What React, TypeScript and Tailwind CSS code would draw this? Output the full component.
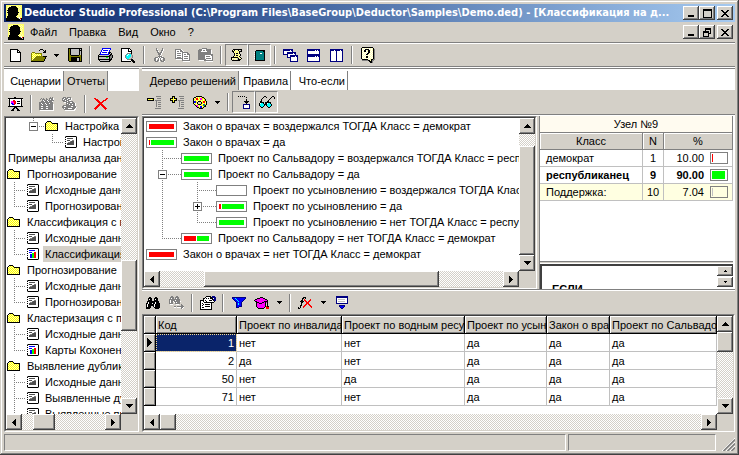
import React from "react";

/* ---------- pixel icons ---------- */

const PALETTE: Record<string, string> = {
  k: "#000000",
  w: "#ffffff",
  y: "#ffff00",
  l: "#ffffb0",
  p: "#ffff66",
  o: "#808000",
  g: "#808080",
  h: "#505050",
  s: "#c0c0c0",
  n: "#000080",
  b: "#0000ff",
  r: "#ff0000",
  d: "#800000",
  t: "#008080",
  c: "#00ffff",
  m: "#ff00ff",
  e: "#00ff00",
};

function Pix({ rows }: { rows: string[] }) {
  const width = Math.max(...rows.map((r) => r.length));
  const rects: React.ReactElement[] = [];
  rows.forEach((row, y) => {
    let x = 0;
    while (x < row.length) {
      const ch = row[x];
      let end = x + 1;
      while (end < row.length && row[end] === ch) end++;
      if (PALETTE[ch]) {
        rects.push(<rect key={`${x}-${y}`} x={x} y={y} width={end - x} height={1} fill={PALETTE[ch]} />);
      }
      x = end;
    }
  });
  return (
    <svg width={width} height={rows.length} viewBox={`0 0 ${width} ${rows.length}`} shapeRendering="crispEdges" className="shrink-0" aria-hidden="true">
      {rects}
    </svg>
  );
}

const LOGO = [
  "pppppppppppppppp",
  "pplplkkkkkplplpp",
  "plpkkkkkkkkplplp",
  "ppkkkkkkkkkkplpp",
  "plkkkkkkkkkklplp",
  "pkkkkkkkkkkkplpp",
  "plkkkkkkkkkkplpp",
  "pkkkkkkkkkkkklpp",
  "plkkkkkkkkkkplpp",
  "ppkkkkkkkkkkplpp",
  "plkkkkkkkkkplplp",
  "pkkkkkkkkklplplp",
  "pkkkkkkkkkkplwpp",
  "kkkkkkkkkkkkhwrk",
  "kkkkkkkkkkkkkksk",
  "kkkkkkkkkkkkkkkk",
];
const NEW = [
  "kkkkkkkk...",
  "kwwwwwwkk..",
  "kwwwwwwkwk.",
  "kwwwwwwkkkk",
  "kwwwwwwwwwk",
  "kwwwwwwwwwk",
  "kwwwwwwwwwk",
  "kwwwwwwwwwk",
  "kwwwwwwwwwk",
  "kwwwwwwwwwk",
  "kwwwwwwwwwk",
  "kwwwwwwwwwk",
  "kkkkkkkkkkk",
];
const OPEN = [
  ".........kkk....",
  "........k...k.k.",
  ".............kk.",
  ".ooo........kkk.",
  "olylooooooo.....",
  "oylylylylyo.....",
  "olylylylylo.....",
  "oylyloooooookkkk",
  "olylooooooooook.",
  "oyloooooooooook.",
  "oloooooooooook..",
  "oooooooooooook..",
  "kkkkkkkkkkkkk...",
];
const SAVE = [
  "kkkkkkkkkkkkkk",
  "kokssssssssksk",
  "koksssssssskkk",
  "kokssssssssksk",
  "kokssssssssksk",
  "kokssssssssksk",
  "kokssssssssksk",
  "kookkkkkkkkook",
  "kooooooooooook",
  "kookkkkkkkkkok",
  "kookkkkkksskok",
  "kookkkkkksskok",
  "kookkkkkksskok",
  ".kkkkkkkkkkkkk",
];
const PRINT = [
  "....bbbbbbbbb..",
  "....bwwwwwwwb..",
  "...bwbbbbbwb...",
  "...bwwwwwwwb...",
  "..bwbbbbbwbkk..",
  "..bwwwwwwwbksk.",
  ".kbbbbbbbbbskk.",
  "ksssssssssskkgk",
  "kkkkkkkkkkkkggk",
  "kssssssseeskggk",
  "ksssssssssskgk.",
  "kkkkkkkkkkkkkk.",
  ".kssssssssskk..",
  "..kkkkkkkkkk...",
];
const PREVIEW = [
  "kkkkkkkkk.......",
  "kwwwwwwkwk......",
  "kwwwwwwkwwk.....",
  "kwwwwwwkkkk.....",
  "kwwwwwwwwwk.....",
  "kwwwwwggggk.....",
  "kwwwwgcwccg.....",
  "kwwwgcwcccsg....",
  "kwwwgcccccsg....",
  "kwwwgccccssg....",
  "kwwwwgccssg.....",
  "kwwwwwggggkk....",
  "kwwwwwwwwwkkk...",
  "kkkkkkkkkk.kkk..",
  "............kk..",
];
const CUT = [
  "..g.....g..",
  "..gw....gw.",
  "..gg...ggw.",
  "...gw..gw..",
  "...gg.ggw..",
  "....gggw...",
  "....gggw...",
  ".....gw....",
  "....ggggw..",
  ".gggwgwggg.",
  "ggwwgwgwwgg",
  "ggw.gwgw.gg",
  "ggwggwgg.gg",
  ".ggg.w.gggw",
];
const COPY = [
  "ggggggw........",
  "gwwwwggw.......",
  "gwggwgggw......",
  "gwwwwwwgggggg..",
  "gwggggwgwwwwgg.",
  "gwwwwwwgwggwggg",
  "gwggggwgwwwwwwg",
  "gwwwwwwgwggggwg",
  "gwggggwgwwwwwwg",
  "ggggggggwggggwg",
  ".wwwwwwgwwwwwwg",
  ".......gggggggg",
  "........wwwwwww",
];
const PASTE = [
  "....ggggg......",
  ".gggwwwwggggg..",
  "ggggwggwgggggw.",
  "gggwwwwwwggggw.",
  "gggggggggggggw.",
  "gggggggggggggw.",
  "ggggggggggggggg",
  "gggggggwwwwwwgg",
  "gggggggwggggwwg",
  "gggggggwwwwwwwg",
  "gggggggwgggggwg",
  "ggggggggwwwwwwg",
  ".wwwwwggggggggg",
  "........wwwwwww",
];
const SCRIPT = [
  "..kkkkkkkkk",
  ".klklllklsk",
  ".kklplplkkk",
  "..klplplk..",
  "...klkklk..",
  "...klplplk.",
  "...klkkllk.",
  "..klplplk..",
  "kkkkkkkplk.",
  "klllllskllk",
  "klslllskkk.",
  ".kkkkkkkk..",
];
const BOOK = [
  "..kkkkkkkkk",
  ".ktttttttkk",
  "wkttttttttk",
  ".kttttwwttk",
  "wkttttttttk",
  ".kttttttttk",
  "wkttttttttk",
  ".kttttttttk",
  "wkttttttttk",
  ".kttttttttk",
  ".kkkkkkkkkk",
];
const CASCADE = [
  "nnnnnnnnnn.....",
  "nnnnnnnwnn.....",
  "nwwwwwwwwn.....",
  "nwwwnnnnnnnnn..",
  "nwwwnnnnnnwnn..",
  "nnnnnwwwwwwwn..",
  "....nwwnnnnnnnn",
  "....nwwnnnnnwnn",
  "....nnnnwwwwwwn",
  ".......nwwwwwwn",
  ".......nwwwwwwn",
  ".......nwwwwwwn",
  ".......nnnnnnnn",
];
const TILE_H = [
  "nnnnnnnnnnnnn",
  "nnnnnnnnwnwnn",
  "nwwwwwwwwwwwn",
  "nwwwwwwwwwwwn",
  "nwwwwwwwwwwwn",
  "nnnnnnnnnnnnn",
  "nnnnnnnnnnnnn",
  "nnnnnnnnwnwnn",
  "nwwwwwwwwwwwn",
  "nwwwwwwwwwwwn",
  "nwwwwwwwwwwwn",
  "nwwwwwwwwwwwn",
  "nnnnnnnnnnnnn",
];
const TILE_V = [
  "nnnnnnnnnnnnn",
  "nnnnwnnnnnwnn",
  "nwwwwwnwwwwwn",
  "nwwwwwnwwwwwn",
  "nwwwwwnwwwwwn",
  "nwwwwwnwwwwwn",
  "nwwwwwnwwwwwn",
  "nwwwwwnwwwwwn",
  "nwwwwwnwwwwwn",
  "nwwwwwnwwwwwn",
  "nwwwwwnwwwwwn",
  "nwwwwwnwwwwwn",
  "nnnnnnnnnnnnn",
];
const HELP = [
  ".kkkkkkkkkkk..",
  "klwlwlwlwlwlk.",
  "kwlwkkkkwlwlkg",
  "klwkkwlkklwlkg",
  "kwlkkwlkkwlwkg",
  "klwlwlwkklwlkg",
  "kwlwlwkklwlwkg",
  "klwlwkklwlwlkg",
  "kwlwlwlwlwlwkg",
  "klwlwkklwlwlkg",
  "kwlwlkkwlwlwkg",
  "klwlwlwlwlwlkg",
  ".kkkkkklwlkkgg",
  ".ggggggkklkgg.",
  "........kkkg..",
  ".........kkg..",
];
const PRESENT = [
  "......kk.......",
  "kkkkkkkkkkkkkkk",
  "wkwwwwwwwwwwwkw",
  ".kwwwrrwwwwwwk.",
  ".kwmmrrrwkkkwk.",
  ".kwmmmrrwwwwwk.",
  ".kwbbmrrwkkkwk.",
  ".kwwbbrwwwwwwk.",
  ".kwwwwwwwwwwwk.",
  "kkkkkkkkkkkkkkk",
  "......kkk......",
  ".....kk.kk.....",
  "....kk...kk....",
  "...kkk...kkk...",
];
const GREY_FACTORY = [
  "...........g.g..",
  "..g.g..g..ggggw.",
  ".g.ggg.gg.gwggw.",
  "...gwgggwgggggg.",
  "..gggwgggwgggw..",
  "gggggggggggggg..",
  "ggwgggwgggwggg..",
  "gggwgggwggggggw.",
  "ggggggggggggggw.",
  "ggwwgggwwgggggw.",
  "ggggggggggggggw.",
  "ggwwgggwwgggggw.",
  "ggggggggggggggw.",
  ".wwwwwwwwwwwwww.",
];
const GREY_GROUP = [
  ".ggg.gggg......",
  "ggwgggwwgw.....",
  "gwgggwgggw.....",
  "gggwgggww......",
  ".ggggwggggg....",
  "..wwggggwwgg...",
  "....gwgggggggw.",
  "....gggwggwggw.",
  ".ggggggggggggw.",
  "ggwwgggggwwggg.",
  "ggggggggggggggw",
  ".gwgggwwwwgggw.",
  "..ggggggggggww.",
  "...wwwwwwwwww..",
];
const RED_X = [
  "rr..........rr",
  ".rrr.......rr.",
  "..rrr....rrr..",
  "...rrr..rr....",
  "....rrrrr.....",
  ".....rrr......",
  "....rrrrr.....",
  "...rrr.rrr....",
  "..rrr...rrr...",
  ".rrr.....rrr..",
  "rrr.......rrr.",
  ".r.........r..",
];
const COLLAPSE = [
  ".........ggggg",
  "..............",
  "kkkkkkk...gggg",
  "kpyplyk.......",
  "kkkkkkk.gggggg",
  ".........g....",
  ".........g.ggg",
  ".........g....",
  ".........g.ggg",
  ".........g....",
  ".........g.ggg",
  "..............",
  "........gggggg",
];
const EXPAND = [
  "..kkk....ggggg",
  "..kyk.........",
  "kkkpkkk...gggg",
  "kpyplyk.......",
  "kkkpkkk.gggggg",
  "..kyk....g....",
  "..kkk....g.ggg",
  ".........g....",
  ".........g.ggg",
  ".........g....",
  ".........g.ggg",
  "..............",
  "........gggggg",
];
const COLORS = [
  "...kkkkkk.....",
  ".kklylylykk...",
  "klyrrlymmyyk..",
  "kylrrylmmylyk.",
  "klylylyylylyk.",
  "kbbylkkklyrryk",
  "kbbyk...kyrrlk",
  "klylk...kylylk",
  ".kylykkkylttyk",
  "..kmmlylyyttk.",
  "...kmylbblykk.",
  "....kkybbyk...",
  "......kkkk....",
];
const JUMP = [
  "k.k.k.k.....",
  "........k...",
  "............",
  "........k...",
  "........k...",
  "......kkkkk.",
  ".......kkk..",
  "........k...",
  ".....nnnnnnn",
  ".....nwwwwwn",
  ".....nwwwwwn",
  ".....nwwwwwn",
  ".....nnnnnnn",
];
const GLASSES = [
  ".....kk......kk.",
  "....k..k....k..k",
  "...k.......k...k",
  "..k.......k.....",
  "..k......k......",
  ".kk.....kk......",
  ".kkkk.kkkkkk....",
  "kwcck.kkwcck....",
  "kcccckkkcccck...",
  "kcccck.kcccck...",
  ".kcck...kcck....",
  "..kk.....kk.....",
];
const FIND = [
  "...kk....kk....",
  "..kkkk..kkkk...",
  "..kwkk..kwkk...",
  "..kkkk..kkkk...",
  ".kkkkkkkkkkkk..",
  ".kwkkkkkkwkkk..",
  "kkwkkkwkkwkkkk.",
  "kwkkkkkkwkkkkk.",
  "kwkkkkkkwkkkkk.",
  "kwkkk..kwkkkkk.",
  "kkkkk...kkkkkk.",
  "kkkk.....kkkk..",
];
const FIND_NEXT = [
  "..gg...gg......",
  ".gggg.gggg.....",
  ".gwgg.gwgg.....",
  "ggggggggggg....",
  "gwggggwgggg....",
  "gwggwggggggw...",
  "gwgg.wgwggg....",
  "gggg..ggggg....",
  ".www...www..g..",
  "............gg.",
  ".....gg.ggggggg",
  ".....ww.wwwwggw",
  "............gw.",
];
const PROPS = [
  "......kkkkk.nnn.",
  ".....kwwwwkknnnn",
  "...kkwkwkwkkkwnn",
  "...kwwwwwwwwknnn",
  "kkkkwkwwwkkkwknn",
  "kwwkwwkwwwwwwwk.",
  "kwwwkkkkkkkkkk..",
  "kwkwwwwwwwwk....",
  "kwwkwkkkkkwk....",
  "kwkwwwwwwwwk....",
  "kwwwwkkkkkwk....",
  "kwkkwwwwwwwk....",
  "kwwwwwwwwwwk....",
  "kkkkkkkkkkkk....",
];
const FUNNEL = [
  "nnnnnnnnnnnnnn",
  "nbbcbbbbbbbbbn",
  ".nbbcbbbbbbbn.",
  "..nbbcbbbbbn..",
  "...nbbcbbbn...",
  "....nbbbbn....",
  "....nbcbbn....",
  "....nbcbbn....",
  "....nbbbbn....",
  "....nbbnnn....",
  "....nnn.......",
];
const HAT = [
  "......kkk......",
  "...kkkmmmkk....",
  ".kkmmmmmmmmkk..",
  "kmmmmmmmmmmmmk.",
  ".kkmmmmmmmkkkk.",
  "..kkkmmmkkmkmk.",
  "..kmmkkkmmmk.k.",
  "..kmmmmmmmmk.k.",
  "..kmmmmmmmmk.k.",
  "..kmmmmmmmmkrkk",
  "...kmmmmmmk.rrr",
  "....kkkkkk..rrr",
];
const FX = [
  ".....kkk.......",
  "....kk.k.......",
  "....k.r.....r..",
  "...kk.rr...rr..",
  "..kkkk.rr.rr...",
  "...kk...rrr....",
  "...k....rrr....",
  "...k...rr.rr...",
  "..kk..rr...rr..",
  "..k..rr.....rr.",
  "k.k..r.......r.",
  "kk.............",
];
const DROP_TABLE = [
  "nnnnnnnnnnnn",
  "nnnnnnnnnnnn",
  "nwwwwwwwwwwn",
  "nwssssssswwn",
  "nwwwwwwwwwwn",
  "nwssssssswwn",
  "nwwwwwwwwwwn",
  "nnnnnnnnnnnn",
  "............",
  "...nnnnnn...",
  "...nbbbbn...",
  "....nbbn....",
  ".....nn.....",
];
const FOLDER = [
  "..kkkk........",
  ".klylyk.......",
  "klylylykkkkkk.",
  "kylylylylylyk.",
  "klylylylylylk.",
  "kylylylylylyk.",
  "klylylylylylk.",
  "kylylylylylyk.",
  "klylylylylylk.",
  "kkkkkkkkkkkkk.",
];
const SHEET = [
  "gkkkkkkkkkkg",
  "kwwwwwwwwwwk",
  "wwhhhhhhwwwk",
  "kwwwwwwwwwwk",
  "wwhhhwwggwwk",
  "kwwwwghhhwwk",
  "wwwgghhhhwwk",
  "kwhhhhhhhwwk",
  "wwhhhhhhhwwk",
  "kwwwwwwwwwwk",
  "kwwwwwwwwwwk",
  "gkkkkkkkkkkg",
];
const CHART = [
  "gkkkkkkkkkkg",
  "kwwwwwwwwwwk",
  "wwbbbbbbwwwk",
  "kwwwwwwwwwwk",
  "wwbbbwwrrwwk",
  "kwwwweerrwwk",
  "wwwbbeerrwwk",
  "kwwbbeerrwwk",
  "wwwbbeerrwwk",
  "kwwbbeerrwwk",
  "kwwwwwwwwwwk",
  "gkkkkkkkkkkg",
];
const CARET = ["kkkkk", ".kkk.", "..k.."];
const UP = ["...k...", "..kkk..", ".kkkkk.", "kkkkkkk"];
const DOWN = ["kkkkkkk", ".kkkkk.", "..kkk..", "...k..."];
const LEFT = ["...k", "..kk", ".kkk", "kkkk", ".kkk", "..kk", "...k"];
const RIGHT = ["k...", "kk..", "kkk.", "kkkk", "kkk.", "kk..", "k..."];
const MINIMIZE = [".......", ".......", ".......", ".......", ".......", ".......", "kkkkkk.", "kkkkkk."];
const MAXIMIZE = ["kkkkkkkkk", "kkkkkkkkk", "k.......k", "k.......k", "k.......k", "k.......k", "k.......k", "k.......k", "kkkkkkkkk"];
const RESTORE = ["..kkkkkk", "..kkkkkk", "..k....k", "kkkkkk.k", "kkkkkk.k", "k....kkk", "k....k..", "k....k..", "kkkkkk.."];
const CLOSE = ["kk....kk", ".kk..kk.", "..kkkk..", "...kk...", "..kkkk..", ".kk..kk.", "kk....kk"];
const POINTER = ["k.....", "kk....", "kkk...", "kkkk..", "kkkkk.", "kkkk..", "kkk...", "kk....", "k....."];

/* ---------- shared pieces ---------- */

const RAISED =
  "bg-[#d4d0c8] shadow-[inset_-1px_-1px_#404040,inset_1px_1px_#fff,inset_-2px_-2px_#808080]";
const TRACK =
  "bg-[repeating-conic-gradient(#ffffff_0_25%,#d4d0c8_0_50%)] bg-[length:2px_2px]";

function ToolButton({ icon, label, pressed }: { icon: string[]; label: string; pressed?: boolean }) {
  return (
    <button
      type="button"
      aria-label={label}
      className={
        "flex h-[22px] w-[23px] shrink-0 items-center justify-center " +
        (pressed ? "border border-t-[#808080] border-l-[#808080] border-r-white border-b-white" : "")
      }
    >
      <Pix rows={icon} />
    </button>
  );
}

function CaretButton({ label }: { label: string }) {
  return (
    <button type="button" aria-label={label} className="flex h-[22px] w-[13px] shrink-0 items-center justify-center">
      <Pix rows={CARET} />
    </button>
  );
}

function Sep() {
  return (
    <div className="flex w-2 shrink-0 justify-center">
      <div className="h-[18px] w-[2px] border-l border-l-[#808080] bg-white" />
    </div>
  );
}

function Groove() {
  return <div className="h-[2px] shrink-0 border-t border-t-[#808080] bg-white" />;
}

function Sunken({ className, children }: { className: string; children: React.ReactNode }) {
  return (
    <div className={"flex min-h-0 min-w-0 border border-t-[#808080] border-l-[#808080] border-r-white border-b-white " + className}>
      <div className="flex min-h-0 min-w-0 flex-1 flex-col border border-t-[#404040] border-l-[#404040] border-r-[#d4d0c8] border-b-[#d4d0c8] bg-white">
        {children}
      </div>
    </div>
  );
}

function ScrollV({ before, thumb, after }: { before: string; thumb: string; after: string }) {
  return (
    <div className={"flex w-4 shrink-0 flex-col " + TRACK}>
      <button type="button" aria-label="Вверх" className={"flex h-4 shrink-0 items-center justify-center " + RAISED}>
        <Pix rows={UP} />
      </button>
      <div className={before} />
      <div className={RAISED + " " + thumb} />
      <div className={after} />
      <button type="button" aria-label="Вниз" className={"flex h-4 shrink-0 items-center justify-center " + RAISED}>
        <Pix rows={DOWN} />
      </button>
    </div>
  );
}

function ScrollH({ before, thumb, after }: { before: string; thumb: string; after: string }) {
  return (
    <div className="flex h-4 shrink-0 bg-[#d4d0c8] pr-4">
      <div className={"flex flex-1 " + TRACK}>
        <button type="button" aria-label="Влево" className={"flex w-4 shrink-0 items-center justify-center " + RAISED}>
          <Pix rows={LEFT} />
        </button>
        <div className={before} />
        <div className={RAISED + " " + thumb} />
        <div className={after} />
        <button type="button" aria-label="Вправо" className={"flex w-4 shrink-0 items-center justify-center " + RAISED}>
          <Pix rows={RIGHT} />
        </button>
      </div>
    </div>
  );
}

function WindowButtons({ middle, middleLabel }: { middle: string[]; middleLabel: string }) {
  return (
    <div className="flex shrink-0 pr-[2px]">
      <button type="button" aria-label="Свернуть" className={"flex h-[14px] w-4 items-center justify-center " + RAISED}>
        <Pix rows={MINIMIZE} />
      </button>
      <button type="button" aria-label={middleLabel} className={"flex h-[14px] w-4 items-center justify-center " + RAISED}>
        <Pix rows={middle} />
      </button>
      <button type="button" aria-label="Закрыть" className={"ml-[2px] flex h-[14px] w-4 items-center justify-center " + RAISED}>
        <Pix rows={CLOSE} />
      </button>
    </div>
  );
}

/* Dotted tree connectors; each piece is one row (16px) tall. */
function Guide({ width, x, to, half, box }: { width: number; x: number; to?: number; half?: boolean; box?: "+" | "-" }) {
  return (
    <svg width={width} height={16} viewBox={`0 0 ${width} 16`} shapeRendering="crispEdges" className="shrink-0" aria-hidden="true">
      <g stroke="#808080" strokeWidth={1} strokeDasharray="1 1">
        <line x1={x + 0.5} y1={0} x2={x + 0.5} y2={half ? 8 : 16} />
        {to !== undefined && <line x1={x} y1={8.5} x2={to} y2={8.5} />}
      </g>
      {box && (
        <>
          <rect x={x - 3.5} y={4.5} width={8} height={8} fill="#fff" stroke="#808080" />
          <rect x={x - 2} y={8} width={5} height={1} fill="#000" />
          {box === "+" && <rect x={x} y={6} width={1} height={5} fill="#000" />}
        </>
      )}
    </svg>
  );
}

/* ---------- left project tree ---------- */

type Node = { kind: "root" | "folder" | "item" | "chart" | "sub" | "leaf"; text: string; last?: boolean; selected?: boolean };

const PROJECT: Node[] = [
  { kind: "sub", text: "Настройка" },
  { kind: "leaf", text: "Настройка" },
  { kind: "root", text: "Примеры анализа данных" },
  { kind: "folder", text: "Прогнозирование" },
  { kind: "item", text: "Исходные данные" },
  { kind: "item", text: "Прогнозирование", last: true },
  { kind: "folder", text: "Классификация с помощью" },
  { kind: "item", text: "Исходные данные" },
  { kind: "chart", text: "Классификация", last: true, selected: true },
  { kind: "folder", text: "Прогнозирование" },
  { kind: "item", text: "Исходные данные" },
  { kind: "item", text: "Прогнозирование", last: true },
  { kind: "folder", text: "Кластеризация с помощью" },
  { kind: "item", text: "Исходные данные" },
  { kind: "chart", text: "Карты Кохонена", last: true },
  { kind: "folder", text: "Выявление дубликатов" },
  { kind: "item", text: "Исходные данные" },
  { kind: "item", text: "Выявленные дубликаты" },
  { kind: "item", text: "Выявленные противоречия" },
];

function ProjectRow({ node }: { node: Node }) {
  const { kind, text, last, selected } = node;
  return (
    <li className="flex h-4 items-center whitespace-nowrap">
      {kind === "sub" && <Guide width={39} x={27} to={38} half box="-" />}
      {kind === "leaf" && <Guide width={59} x={46} to={57} half />}
      {(kind === "item" || kind === "chart") && <Guide width={21} x={8} to={19} half={last} />}
      {kind === "folder" && <span className="w-px shrink-0" />}
      {(kind === "folder" || kind === "sub") && <Pix rows={FOLDER} />}
      {(kind === "item" || kind === "leaf") && <Pix rows={SHEET} />}
      {kind === "chart" && <Pix rows={CHART} />}
      <span className={"h-4 flex-1 pl-[2px] leading-4 " + (kind === "root" ? "" : "ml-1 ") + (selected ? "bg-[#d4d0c8]" : "")}>{text}</span>
    </li>
  );
}

/* ---------- decision tree ---------- */

function Bar({ red, green }: { red: string; green: string }) {
  return (
    <div className="flex h-[11px] w-[31px] shrink-0 gap-px border border-[#808080] bg-white p-[2px]">
      {red && <div className={"bg-[#ff0000] " + red} />}
      {green && <div className={"bg-[#00ff00] " + green} />}
    </div>
  );
}

const RULES = [
  { guides: <span className="w-px shrink-0" />, red: "flex-1", green: "", text: "Закон о врачах = воздержался ТОГДА Класс = демократ" },
  { guides: <span className="w-px shrink-0" />, red: "w-px", green: "flex-1", text: "Закон о врачах = да" },
  { guides: <Guide width={36} x={17} to={36} />, red: "", green: "flex-1", text: "Проект по Сальвадору = воздержался ТОГДА Класс = республиканец" },
  { guides: <Guide width={36} x={17} to={36} box="-" />, red: "", green: "flex-1", text: "Проект по Сальвадору = да" },
  { guides: <><Guide width={36} x={17} /><Guide width={35} x={16} to={35} /></>, red: "", green: "", text: "Проект по усыновлению = воздержался ТОГДА Класс = республиканец" },
  { guides: <><Guide width={36} x={17} /><Guide width={35} x={16} to={35} box="+" /></>, red: "w-[2px]", green: "flex-1", text: "Проект по усыновлению = да" },
  { guides: <><Guide width={36} x={17} /><Guide width={35} x={16} to={35} half /></>, red: "", green: "flex-1", text: "Проект по усыновлению = нет ТОГДА Класс = республиканец" },
  { guides: <Guide width={36} x={17} to={36} half />, red: "flex-1", green: "flex-1", text: "Проект по Сальвадору = нет ТОГДА Класс = демократ" },
  { guides: <span className="w-px shrink-0" />, red: "flex-1", green: "", text: "Закон о врачах = нет ТОГДА Класс = демократ" },
];

/* ---------- data grid ---------- */

const COLUMNS = [
  { name: "Код", width: "w-[81px]" },
  { name: "Проект по инвалидам", width: "w-[105px]" },
  { name: "Проект по водным ресурсам", width: "w-[123px]" },
  { name: "Проект по усыновлению", width: "w-[82px]" },
  { name: "Закон о врачах", width: "w-[63px]" },
  { name: "Проект по Сальвадору", width: "" },
];

const DATA = [
  ["1", "нет", "нет", "да", "да", "да"],
  ["2", "да", "нет", "да", "да", "да"],
  ["50", "нет", "да", "да", "да", "да"],
  ["71", "нет", "нет", "да", "да", "да"],
];

const HEAD_CELL =
  "h-[18px] overflow-hidden border-r border-b border-black bg-[#d4d0c8] p-0 pl-[2px] text-left font-normal whitespace-nowrap shadow-[inset_1px_1px_#fff,inset_-1px_-1px_#808080]";

function DataGrid() {
  return (
    <table className="w-full table-fixed border-separate border-spacing-0">
      <thead>
        <tr>
          <th scope="col" aria-label="Строка" className={"w-3 " + HEAD_CELL} />
          {COLUMNS.map((c) => (
            <th key={c.name} scope="col" className={c.width + " " + HEAD_CELL}>{c.name}</th>
          ))}
        </tr>
      </thead>
      <tbody>
        {DATA.map((row, i) => (
          <tr key={row[0]}>
            <td className="h-[18px] overflow-hidden border-r border-b border-black bg-[#d4d0c8] p-0 pl-[3px] shadow-[inset_1px_1px_#fff,inset_-1px_-1px_#808080]">
              {i === 0 && <Pix rows={POINTER} />}
            </td>
            {row.map((cell, j) => (
              <td
                key={j}
                className={
                  "h-[18px] overflow-hidden border-r border-b border-[#c0c0c0] p-0 px-[2px] whitespace-nowrap " +
                  (j === 0 ? "text-right " : "") +
                  (i === 0 && j === 0 ? "bg-[#0a246a] text-white outline-1 -outline-offset-1 outline-dotted outline-[#f5db95]" : "")
                }
              >
                {cell}
              </td>
            ))}
          </tr>
        ))}
      </tbody>
    </table>
  );
}

/* ---------- node statistics ---------- */

const STATS = [
  { name: "демократ", n: "1", pct: "10.00", fill: "w-px bg-[#ff0000]", row: "" },
  { name: "республиканец", n: "9", pct: "90.00", fill: "w-[13px] bg-[#00ff00]", row: "font-bold" },
  { name: "Поддержка:", n: "10", pct: "7.04", fill: "w-px bg-[#c0c0c0]", row: "bg-[#ffffe1]" },
];

const STAT_HEAD = "h-[17px] border-r border-b border-[#808080] bg-[#d4d0c8] p-0 font-normal shadow-[inset_1px_1px_#fff]";
const STAT_CELL = "h-[17px] border-r border-b border-[#c0c0c0] p-0";

function NodePanel() {
  return (
    <section className="flex w-[196px] shrink-0 flex-col border-l border-l-[#808080] bg-white pr-[2px]">
      <h2 className="h-[17px] shrink-0 border-r border-b border-[#808080] bg-[#fffbf0] text-center leading-4">Узел №9</h2>
      <table className="w-full table-fixed border-separate border-spacing-0">
        <thead>
          <tr>
            <th scope="col" className={STAT_HEAD}>Класс</th>
            <th scope="col" className={"w-[21px] " + STAT_HEAD}>N</th>
            <th scope="col" className={"w-[69px] " + STAT_HEAD}>%</th>
          </tr>
        </thead>
        <tbody>
          {STATS.map((s) => (
            <tr key={s.name} className={s.row}>
              <td className={STAT_CELL + " pl-[6px]"}>{s.name}</td>
              <td className={STAT_CELL + " text-center"}>{s.n}</td>
              <td className={STAT_CELL}>
                <div className="flex items-center justify-end gap-[6px] pr-1">
                  {s.pct}
                  <div className="h-3 w-[18px] border border-[#808080] p-px">
                    <div className={"h-full " + s.fill} />
                  </div>
                </div>
              </td>
            </tr>
          ))}
        </tbody>
      </table>
      <div className="flex-1" />
      <div className="h-[3px] shrink-0 border-t border-b border-t-[#808080] border-b-white bg-[#d4d0c8]" />
      <div className="flex h-[25px] shrink-0 overflow-hidden border-t-2 border-l-2 border-[#404040]">
        <textarea
          aria-label="Правило"
          readOnly
          rows={1}
          defaultValue="ЕСЛИ"
          className="h-10 min-w-0 flex-1 resize-none overflow-hidden pt-[17px] pl-[10px] text-[11px] leading-3 font-bold outline-none"
        />
        <div className="flex w-4 shrink-0 flex-col gap-px">
          <button type="button" aria-label="Вверх" className={"flex h-[10px] items-center justify-center " + RAISED}>
            <Pix rows={[".k.", "kkk"]} />
          </button>
          <button type="button" aria-label="Вниз" className={"flex h-[10px] items-center justify-center " + RAISED}>
            <Pix rows={["kkk", ".k."]} />
          </button>
        </div>
      </div>
    </section>
  );
}

/* ---------- window ---------- */

function Tab({ label, active, width }: { label: string; active?: boolean; width: string }) {
  return (
    <button
      type="button"
      role="tab"
      aria-selected={!!active}
      className={
        "shrink-0 border-r border-r-[#808080] pr-[2px] text-right leading-[18px] whitespace-nowrap " + width + (active ? " bg-[#d4d0c8]" : "")
      }
    >
      {label}
    </button>
  );
}

export default function App() {
  return (
    <div className="flex h-screen w-full flex-col overflow-hidden bg-[#d4d0c8] p-1 font-['Liberation_Sans',Arial,sans-serif] text-[11px] leading-4 text-black shadow-[inset_-1px_-1px_#404040,inset_1px_1px_#d4d0c8,inset_-2px_-2px_#808080,inset_2px_2px_#fff]">
      <header className="flex h-[18px] shrink-0 items-center bg-linear-to-r from-[#0a246a] to-[#a6caf0] pl-[2px]">
        <Pix rows={LOGO} />
        <h1 className="min-w-0 flex-1 truncate pl-[2px] font-['DejaVu_Sans_Condensed','DejaVu_Sans',sans-serif] text-[11px] leading-[18px] font-bold text-white">
          Deductor Studio Professional (C:\Program Files\BaseGroup\Deductor\Samples\Demo.ded) - [Классификация на д...
        </h1>
        <WindowButtons middle={MAXIMIZE} middleLabel="Развернуть" />
      </header>

      <nav className="flex h-5 shrink-0 items-center pl-1">
        <Pix rows={LOGO} />
        <div className="flex flex-1 gap-3 pl-[6px]">
          {["Файл", "Правка", "Вид", "Окно", "?"].map((m) => (
            <button type="button" key={m}>{m}</button>
          ))}
        </div>
        <WindowButtons middle={RESTORE} middleLabel="Восстановить" />
      </nav>
      <Groove />
      <div role="toolbar" aria-label="Главная" className="flex h-[22px] shrink-0 items-center">
        <ToolButton icon={NEW} label="Создать" />
        <ToolButton icon={OPEN} label="Открыть" />
        <CaretButton label="Последние файлы" />
        <ToolButton icon={SAVE} label="Сохранить" />
        <Sep />
        <ToolButton icon={PRINT} label="Печать" />
        <ToolButton icon={PREVIEW} label="Просмотр" />
        <Sep />
        <ToolButton icon={CUT} label="Вырезать" />
        <ToolButton icon={COPY} label="Копировать" />
        <ToolButton icon={PASTE} label="Вставить" />
        <Sep />
        <ToolButton icon={SCRIPT} label="Сценарии" pressed />
        <ToolButton icon={BOOK} label="Отчеты" pressed />
        <Sep />
        <ToolButton icon={CASCADE} label="Каскадом" />
        <ToolButton icon={TILE_H} label="Горизонтально" />
        <ToolButton icon={TILE_V} label="Вертикально" />
        <Sep />
        <ToolButton icon={HELP} label="Справка" />
      </div>
      <Groove />

      <div className="flex min-h-0 flex-1">
        <aside className="flex w-[135px] shrink-0 flex-col">
          <div role="tablist" aria-label="Проект" className="flex h-[23px] shrink-0 border-t border-t-[#808080] bg-white pt-[2px]">
            <Tab label="Сценарии" width="w-[60px]" />
            <Tab label="Отчеты" width="w-[44px]" active />
          </div>
          <div role="toolbar" aria-label="Отчеты" className="flex h-[25px] shrink-0 items-center">
            <ToolButton icon={PRESENT} label="Показать" />
            <Sep />
            <ToolButton icon={GREY_FACTORY} label="Добавить узел" />
            <ToolButton icon={GREY_GROUP} label="Добавить группу" />
            <Sep />
            <ToolButton icon={RED_X} label="Удалить" />
          </div>
          <Sunken className="flex-1">
            <div className="flex min-h-0 flex-1">
              <ul className="min-w-0 flex-1 overflow-hidden">
                {PROJECT.map((node, i) => (
                  <ProjectRow key={i} node={node} />
                ))}
              </ul>
              <ScrollV before="flex-[126]" thumb="flex-[71]" after="flex-[67]" />
            </div>
            <ScrollH before="flex-[11]" thumb="flex-[22]" after="flex-[50]" />
          </Sunken>
        </aside>

        <div className="w-[3px] shrink-0" />

        <main className="flex min-w-0 flex-1 flex-col">
          <div role="tablist" aria-label="Визуализатор" className="flex h-[22px] shrink-0 border-t border-t-[#808080] bg-white pt-[2px]">
            <Tab label="Дерево решений" width="w-[97px]" active />
            <Tab label="Правила" width="w-[52px]" />
            <Tab label="Что-если" width="w-[57px]" />
          </div>
          <div role="toolbar" aria-label="Дерево" className="flex h-6 shrink-0 items-center">
            <ToolButton icon={COLLAPSE} label="Свернуть узлы" />
            <ToolButton icon={EXPAND} label="Развернуть узлы" />
            <ToolButton icon={COLORS} label="Цвета" />
            <CaretButton label="Выбор цвета" />
            <Sep />
            <ToolButton icon={JUMP} label="Показать детали" pressed />
            <ToolButton icon={GLASSES} label="Просмотр узла" pressed />
          </div>
          <Groove />

          <div className="flex min-h-0 flex-1">
            <Sunken className="flex-1">
              <div className="flex min-h-0 flex-1">
                <ul className="min-w-0 flex-1 overflow-hidden pl-px">
                  {RULES.map((r) => (
                    <li key={r.text} className="flex h-4 items-center whitespace-nowrap">
                      {r.guides}
                      <Bar red={r.red} green={r.green} />
                      <span className="pl-[6px] leading-4">{r.text}</span>
                    </li>
                  ))}
                </ul>
                <ScrollV before="flex-[12]" thumb="flex-[108]" after="flex-[0]" />
              </div>
              <ScrollH before="flex-[44]" thumb="flex-[235]" after="flex-[64]" />
            </Sunken>
            <div className="w-[2px] shrink-0" />
            <NodePanel />
          </div>
          <Groove />

          <div role="toolbar" aria-label="Таблица" className="flex h-[23px] shrink-0 items-center">
            <ToolButton icon={FIND} label="Найти" />
            <ToolButton icon={FIND_NEXT} label="Найти далее" />
            <Sep />
            <ToolButton icon={PROPS} label="Свойства" />
            <Sep />
            <ToolButton icon={FUNNEL} label="Фильтр" />
            <ToolButton icon={HAT} label="Обучающая выборка" />
            <CaretButton label="Выбор выборки" />
            <Sep />
            <ToolButton icon={FX} label="Очистить функцию" />
            <CaretButton label="Выбор функции" />
            <ToolButton icon={DROP_TABLE} label="Столбцы" />
          </div>
          <Sunken className="shrink-0">
            <div className="flex">
              <div className="min-w-0 flex-1 overflow-hidden pb-2">
                <DataGrid />
              </div>
              <ScrollV before="flex-[0]" thumb="flex-[20]" after="flex-[46]" />
            </div>
            <ScrollH before="flex-[0]" thumb="flex-[16]" after="flex-[524]" />
          </Sunken>
        </main>
      </div>

      <footer className="flex h-[19px] shrink-0 gap-[2px] pt-[2px]">
        <div className="flex-1 border border-t-[#808080] border-l-[#808080] border-r-white border-b-white" />
        <div className="w-[148px] shrink-0 border border-t-[#808080] border-l-[#808080] border-r-white border-b-white" />
        <div className="flex w-[17px] shrink-0 items-end justify-end">
          <svg width="13" height="13" viewBox="0 0 13 13" aria-hidden="true">
            <path d="M0 13L13 0M4 13L13 4M8 13L13 8" stroke="#fff" />
            <path d="M1.5 13L13 1.5M5.5 13L13 5.5M9.5 13L13 9.5" stroke="#808080" strokeWidth="1.6" />
          </svg>
        </div>
      </footer>
    </div>
  );
}
